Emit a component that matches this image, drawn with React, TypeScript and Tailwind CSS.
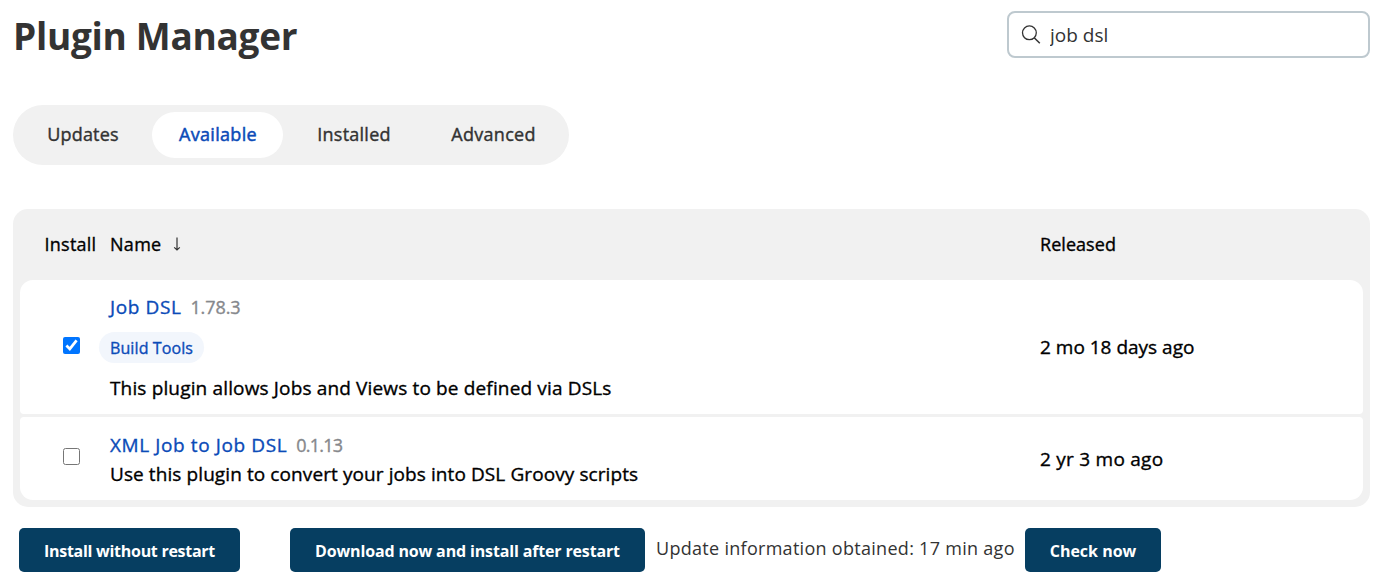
const link = "text-[#0b4bb8]";

function Header() {
  return (
    <header className="flex h-[47px] items-center justify-between">
      <h1 className="pt-[3px] text-[37px] leading-[50px] font-bold tracking-[-0.3px] text-[#333333]">
        Plugin Manager
      </h1>
      <label className="flex h-[47px] w-[363px] items-center rounded-[8px] border-2 border-[#bec9cf] bg-white pl-[12px]">
        <svg viewBox="0 0 20 20" className="mt-px size-5 shrink-0" fill="none" stroke="#333" strokeWidth="1.3">
          <circle cx="8.4" cy="7.8" r="6.9" />
          <path d="M13.2 12.7 18.8 18.3" strokeWidth="1.5" />
        </svg>
        <input
          type="text"
          defaultValue="job dsl"
          className="ml-[9px] w-[280px] bg-transparent text-[19px] leading-7 text-[#333333] outline-none"
        />
      </label>
    </header>
  );
}

function Tabs() {
  const tab =
    "flex h-[46px] items-center justify-center rounded-full pb-px pl-px text-[18px] font-medium text-[#333333] [-webkit-text-stroke:0.4px]";
  return (
    <nav className="mt-[47px] flex h-[60px] w-[556px] items-center gap-[7px] rounded-full bg-[#f1f1f1] px-[7px]">
      <a className={`${tab} w-[125px] tracking-[0.15px]`}>Updates</a>
      <a className="flex h-[46px] w-[131px] items-center justify-center rounded-full bg-white pb-px pl-px text-[18px] font-medium tracking-[0.3px] text-[#0b4bb8] [-webkit-text-stroke:0.5px]">
        Available
      </a>
      <a className={`${tab} w-[127px] tracking-[0.25px]`}>Installed</a>
      <a className={`${tab} w-[138px] tracking-[0.3px]`}>Advanced</a>
    </nav>
  );
}

function PluginTable() {
  const row =
    "grid grid-cols-[90px_930px_1fr] bg-white text-[19px] font-medium text-black [-webkit-text-stroke:0.35px]";
  return (
    <section className="mt-[44px] h-[298px] rounded-[15px] bg-[#f1f1f1] px-[7px]">
      <div className="grid h-[71px] grid-cols-[90px_930px_1fr] items-center pb-px text-[18px] font-medium text-black [-webkit-text-stroke:0.35px]">
        <span className="pl-[24.5px] tracking-[0.25px]">Install</span>
        <span className="flex items-center">
          <span className="tracking-[0.3px]">Name</span>
          <svg viewBox="0 0 8 14" className="ml-[11px] h-[14px] w-2" fill="none" stroke="#333" strokeWidth="1.2">
            <path d="M4 0.5V13M1.2 10.4 4 13 6.8 10.4" />
          </svg>
        </span>
        <span className="tracking-[0.05px]">Released</span>
      </div>

      <div className={`${row} h-[134px] rounded-t-[13px] rounded-b-[4px]`}>
        <div className="pt-[57px] pl-[43px]">
          <input type="checkbox" defaultChecked className="block size-[17px] accent-[#0075ff]" />
        </div>
        <div className="pt-[13px]">
          <div className="flex h-7 items-center gap-[9px]">
            <a className={`${link} tracking-[0.6px]`}>Job DSL</a>
            <span className="text-[18px] tracking-[-0.1px] text-[#86888c]">1.78.3</span>
          </div>
          <span className="mt-[11px] -ml-[11px] flex h-[31px] w-[105px] items-center justify-center rounded-full bg-[#f2f6fc] text-[16px] tracking-[0.1px] text-[#0b4bb8]">
            Build Tools
          </span>
          <p className="mt-[11px] h-7 leading-7 tracking-[0.15px]">
            This plugin allows Jobs and Views to be defined via DSLs
          </p>
        </div>
        <div className="self-center">2 mo 18 days ago</div>
      </div>

      <div className={`${row} mt-[3px] h-[83px] rounded-t-[4px] rounded-b-[13px]`}>
        <div className="pt-[31px] pl-[43px]">
          <input type="checkbox" className="block size-[17px]" />
        </div>
        <div className="pt-[14px]">
          <div className="flex h-7 items-center gap-[9px]">
            <a className={`${link} tracking-[0.6px]`}>XML Job to Job DSL</a>
            <span className="text-[18px] tracking-[-0.75px] text-[#86888c]">0.1.13</span>
          </div>
          <p className="mt-px h-7 leading-7 tracking-[0.09px]">
            Use this plugin to convert your jobs into DSL Groovy scripts
          </p>
        </div>
        <div className="self-center pt-[2px] tracking-[0.25px]">2 yr 3 mo ago</div>
      </div>
    </section>
  );
}

function Actions() {
  const button = "flex h-[44px] items-center justify-center rounded-[5px] bg-[#063e61] pt-px text-[16px] font-bold text-white";
  return (
    <footer className="mt-[21px] flex h-[44px] pl-[6px]">
      <button className={`${button} w-[221px] tracking-[-0.28px]`}>Install without restart</button>
      <button className={`${button} ml-[50px] w-[355px] tracking-[-0.15px]`}>
        Download now and install after restart
      </button>
      <span className="ml-[11px] w-[369px] text-[18px] leading-[40px] tracking-[0.29px] whitespace-nowrap text-[#333333]">
        Update information obtained: 17 min ago
      </span>
      <button className={`${button} w-[136px]`}>Check now</button>
    </footer>
  );
}

export default function App() {
  return (
    <main className="h-[586px] w-[1383px] overflow-hidden bg-white px-[13px] pt-[11px] font-['Open_Sans','Noto_Sans',sans-serif]">
      <Header />
      <Tabs />
      <PluginTable />
      <Actions />
    </main>
  );
}
